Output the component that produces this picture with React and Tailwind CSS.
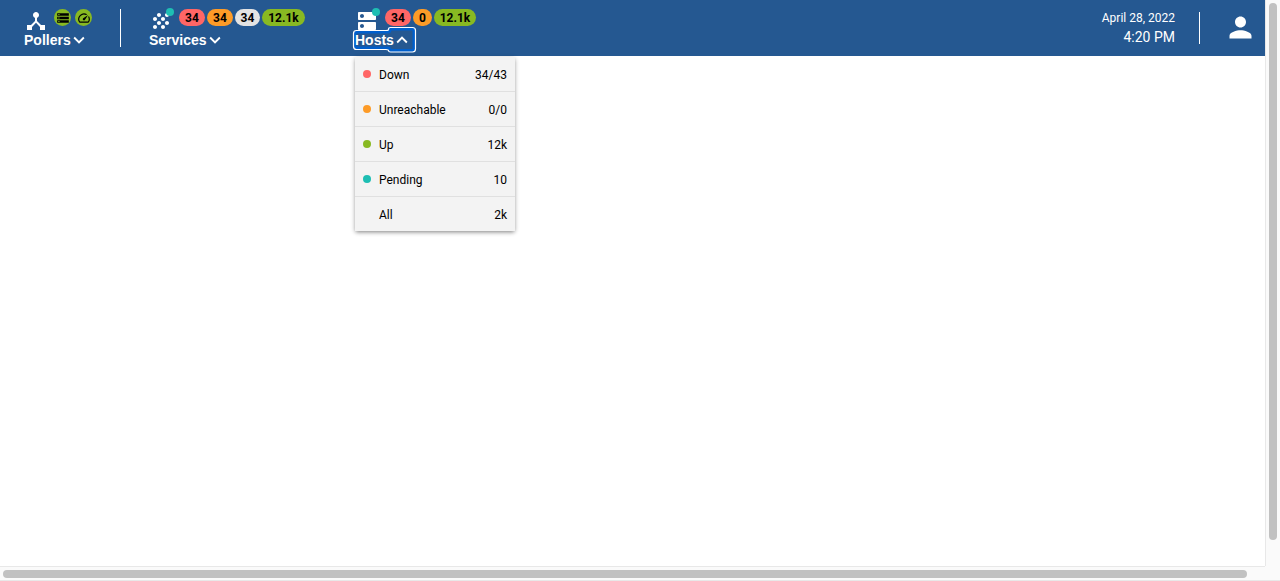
import { MdDeviceHub, MdStorage, MdSpeed, MdGrain, MdDns, MdPerson, MdExpandMore, MdExpandLess } from 'react-icons/md';

const tones = {
  red: 'bg-[#ff6666]',
  orange: 'bg-[#fd9b27]',
  gray: 'bg-[#e3e3e3]',
  green: 'bg-[#88b922]',
  teal: 'bg-[#1ebeb3]',
};

function Badge({ tone, width, children }) {
  return (
    <span className={`flex h-[17px] items-center justify-center rounded-full text-xs font-bold leading-none text-black ${tones[tone]} ${width}`}>
      {children}
    </span>
  );
}

function StatusIcon({ icon: Icon }) {
  return (
    <span className="flex size-[17px] items-center justify-center rounded-full bg-[#88b922] text-black">
      <Icon className="size-[14px]" />
    </span>
  );
}

function MenuIcon({ icon: Icon, pending }) {
  return (
    <span className="relative block size-6 shrink-0">
      <Icon className="size-6" />
      {pending && <span className="absolute -top-px right-[-1px] size-2 rounded-full bg-[#1ebeb3]" />}
    </span>
  );
}

function MenuLabel({ text, open }) {
  const Chevron = open ? MdExpandLess : MdExpandMore;
  return (
    <div className="relative -mt-1 flex h-[22px] items-center font-['Liberation_Sans',sans-serif] text-sm font-bold">
      {open && (
        <svg className="absolute -left-[3px] -top-[3px]" width="65" height="28" viewBox="0 0 65 28" fill="none">
          <path d="M5 6H36Q38 6 38 3H60Q62 3 62 5V22.5Q62 24.5 60 24.5H38Q38 22 36 22H5Q3 22 3 20V8Q3 6 5 6Z" stroke="#005fcc" strokeWidth="3" />
          <path d="M4.5 4.5H34Q36.5 4.5 36.5 3.5Q36.5 1.5 38.5 1.5H60.5Q63.5 1.5 63.5 4.5V23Q63.5 26 60.5 26H38.5Q36.5 26 36.5 24.5Q36.5 23.5 34 23.5H4.5Q1.5 23.5 1.5 20.5V7.5Q1.5 4.5 4.5 4.5Z" stroke="#ffffff" strokeWidth="1.2" />
        </svg>
      )}
      <span className="relative">{text}</span>
      <Chevron className="relative -ml-[3px] size-[22px]" />
    </div>
  );
}

const rows = [
  { label: 'Down', value: '34/43', tone: 'red' },
  { label: 'Unreachable', value: '0/0', tone: 'orange' },
  { label: 'Up', value: '12k', tone: 'green' },
  { label: 'Pending', value: '10', tone: 'teal' },
  { label: 'All', value: '2k' },
];

function HostMenu() {
  return (
    <ul className="absolute left-0 top-12 w-40 bg-[#f3f3f3] text-xs text-black shadow-[0_2px_4px_-1px_rgba(0,0,0,0.35),0_1px_5px_rgba(0,0,0,0.2)]">
      {rows.map((row) => (
        <li key={row.label} className="flex h-[35px] items-center border-b border-[#e0e0e0] px-2 last:h-[34px] last:border-b-0">
          <span className={`mr-2 size-2 rounded-full ${row.tone ? tones[row.tone] : ''}`} />
          <span className="grow pt-0.5">{row.label}</span>
          <span className="pt-0.5">{row.value}</span>
        </li>
      ))}
    </ul>
  );
}

export default function App() {
  return (
    <div className="grid h-[581px] w-[1280px] grid-cols-[1265px_15px] grid-rows-[566px_15px] overflow-hidden bg-white font-[Roboto,sans-serif]">
      <div>
        <header className="flex h-14 bg-[#255891] text-white">
          <section className="ml-6 mt-[9px] w-24">
            <div className="flex">
              <MenuIcon icon={MdDeviceHub} />
              <div className="ml-[6px] flex gap-1">
                <StatusIcon icon={MdStorage} />
                <StatusIcon icon={MdSpeed} />
              </div>
            </div>
            <MenuLabel text="Pollers" />
          </section>
          <div className="mt-[9px] h-[38px] w-px bg-white" />
          <section className="ml-7 mt-[9px] w-[206px]">
            <div className="flex">
              <MenuIcon icon={MdGrain} pending />
              <div className="ml-[6px] flex gap-0.5">
                <Badge tone="red" width="w-[26px]">34</Badge>
                <Badge tone="orange" width="w-[26px]">34</Badge>
                <Badge tone="gray" width="w-[25px]">34</Badge>
                <Badge tone="green" width="w-[43px]">12.1k</Badge>
              </div>
            </div>
            <MenuLabel text="Services" />
          </section>
          <section className="relative mt-[9px]">
            <div className="flex">
              <MenuIcon icon={MdDns} pending />
              <div className="ml-[6px] flex gap-0.5">
                <Badge tone="red" width="w-[26px]">34</Badge>
                <Badge tone="orange" width="w-[19px]">0</Badge>
                <Badge tone="green" width="w-[42px]">12.1k</Badge>
              </div>
            </div>
            <MenuLabel text="Hosts" open />
            <HostMenu />
          </section>
          <div className="ml-auto mr-6 mt-[9px] text-right">
            <div className="text-xs leading-[18px]">April 28, 2022</div>
            <div className="text-sm leading-5">4:20 PM</div>
          </div>
          <div className="mt-3 h-8 w-px bg-white" />
          <MdPerson className="ml-[23.5px] mr-[8.5px] mt-[11px] size-[33px]" />
        </header>
      </div>
      <div className="border-l border-[#e8e8e8] bg-[#fafafa] pl-[3px] pt-[3px]">
        <div className="h-[537px] w-2 rounded-full bg-[#c1c1c1]" />
      </div>
      <div className="border-y border-[#e8e8e8] bg-[#fafafa] pl-[3px] pt-[3px]">
        <div className="h-2 w-[1244px] rounded-full bg-[#c1c1c1]" />
      </div>
      <div className="border-b border-[#e8e8e8] bg-[#fafafa]" />
    </div>
  );
}
